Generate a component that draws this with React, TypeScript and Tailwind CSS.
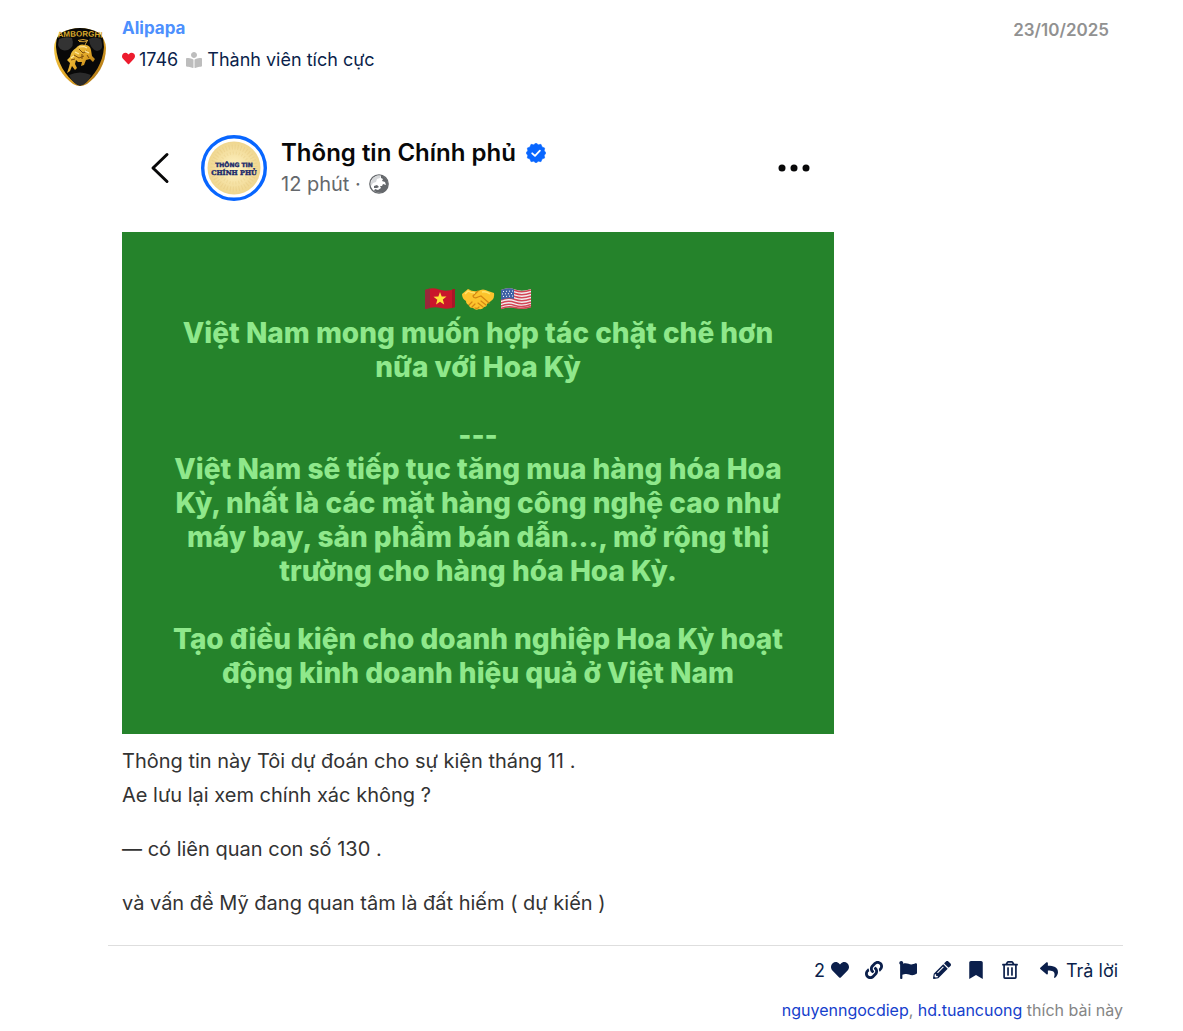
import React, {useState} from "react";
import {FaBookmark, FaBookReader, FaFlag, FaHeart, FaLink, FaPencilAlt, FaRegTrashAlt, FaReply} from "react-icons/fa";

const Shield: React.FC = () => (
    <svg viewBox="0 0 52 58" className="h-[58px] w-[52px]" role="img" aria-label="Alipapa">
        <defs>
            <linearGradient id="gold" x1="0" y1="0" x2="1" y2="1">
                <stop offset="0" stopColor="#f6d04d"/>
                <stop offset="0.55" stopColor="#e0a526"/>
                <stop offset="1" stopColor="#9b6410"/>
            </linearGradient>
            <clipPath id="shieldClip">
                <path d="M7 5Q26-5 45 5Q52 12 52 20C52 36 43 49 33 56Q26 60 19 56C9 49 0 36 0 20Q0 12 7 5Z"/>
            </clipPath>
            <path id="nameArc" d="M0 10Q26 7 52 10"/>
        </defs>
        <g clipPath="url(#shieldClip)">
            <path d="M0 0H52V58H0Z" fill="url(#gold)"/>
            <path d="M5 4Q26-6 47 4Q50 12 50 19C49 35 40 48 31 55Q26 59 21 55C12 48 3 35 2 19Q2 10 5 4Z" fill="#080808"/>
            <path d="M5 11Q12 8 18 10Q21 19 14 22Q6 24 4 17Z" fill="#333"/>
            <path d="M47 11Q40 8 35 11Q36 21 43 23Q49 22 48 16Z" fill="#2c2c2c"/>
            <path d="M15 47Q26 42 37 47Q34 56 26 58Q19 56 15 47Z" fill="#2b2b2b"/>
        </g>
        <text fill="#d9a92c" fontFamily="Liberation Sans" fontWeight="700" fontSize="8" textAnchor="middle">
            <textPath href="#nameArc" startOffset="50%">AMBORGHI</textPath>
        </text>
        <path d="M24 12.500Q29 10.500 34 12.500Q31 14.500 25 13.500M33 13L31 17" fill="none" stroke="#d6a437" strokeWidth="1"/>
        <path
            d="M22 20Q26 15 31 17Q36 17 37 22L38 28L41 31L39 34L36 31L32 32L30 37L27 38L28 34L24 34L22 32L21 36L23 40L21 42L18 38L16 43L13 45L15 39L16 35L13 32L16 29Q17 23 22 20Z"
            fill="url(#gold)"/>
        <path d="M25 21L29 25L33 23M20 27L25 30L30 28M33 27L35 30M17 32L21 31M28 26L28 31" fill="none" stroke="#7b4b0c" strokeWidth="1"/>
        <path d="M25 19L30 18.500L33 20M21 24L25 26M31 23L35 25M17 30L20 28" fill="none" stroke="#ffe8a0" strokeWidth="1.200"/>
    </svg>
);

const PageSeal: React.FC = () => (
    <svg viewBox="0 0 66 66" className="size-[66px] shrink-0" role="img" aria-label="Thông tin Chính phủ">
        <defs>
            <radialGradient id="seal">
                <stop offset="0" stopColor="#fff3c4"/>
                <stop offset="1" stopColor="#efd68f"/>
            </radialGradient>
        </defs>
        <circle cx="33" cy="33" r="31.300" fill="#fff" stroke="#0866ff" strokeWidth="3.400"/>
        <circle cx="33" cy="33" r="26.500" fill="url(#seal)"/>
        <circle cx="33" cy="33" r="21" fill="none" stroke="#e3c67c" strokeWidth="5" strokeDasharray="1 2" opacity="0.4"/>
        <circle cx="33" cy="33" r="15" fill="none" stroke="#e3c67c" strokeWidth="3" strokeDasharray="1 2" opacity="0.3"/>
        <g fill="#1b2a6b" stroke="#1b2a6b" strokeWidth="0.400" fontWeight="700" textAnchor="middle">
            <text x="33" y="32" fontSize="6" fontFamily="DejaVu Sans">THÔNG TIN</text>
            <text x="33" y="40" fontSize="6.500" fontFamily="DejaVu Serif">CHÍNH PHỦ</text>
        </g>
    </svg>
);

const Verified: React.FC = () => (
    <svg viewBox="0 0 20 20" className="size-5" role="img" aria-label="Đã xác minh">
        <path
            d="M10 0L12.300 1.700L15 1.300L16.100 3.900L18.700 5L18.300 7.700L20 10L18.300 12.300L18.700 15L16.100 16.100L15 18.700L12.300 18.300L10 20L7.700 18.300L5 18.700L3.900 16.100L1.300 15L1.700 12.300L0 10L1.700 7.700L1.300 5L3.900 3.900L5 1.300L7.700 1.700Z"
            fill="#0866ff" stroke="#0866ff" strokeLinejoin="round" strokeWidth="0.500"/>
        <path d="M6.200 10.300L9 12.900L13.900 7.700" fill="none" stroke="#fff" strokeWidth="1.800" strokeLinecap="round" strokeLinejoin="round"/>
    </svg>
);

const Globe: React.FC = () => (
    <svg viewBox="0 0 20 20" className="size-5" aria-hidden="true">
        <circle cx="10" cy="10" r="9.200" fill="#fff" stroke="#65686c" strokeWidth="1.300"/>
        <path
            d="M12 1.500Q18 3 19 9Q19 15 15 18Q9 20 5 17L6 15L9 16L12 14L11 12L13 12L14 10L17 11L16 8L13 7L14 5L12 4Z"
            fill="#65686c"/>
        <path d="M2 8L4 4L8 1.500L12 1.500L11 4L8 5L7 8L4 9L2 12Z" fill="#d5d7d9"/>
        <path d="M5 12L8 11L10 13L8 14L5 14Z" fill="#65686c"/>
    </svg>
);

const VietnamFlag: React.FC = () => (
    <svg viewBox="0 0 32 24" className="h-6 w-8" role="img" aria-label="Việt Nam">
        <path d="M1 3Q8 0 15 2.500T31 2V20Q24 23 17 21T1 22Z" fill="#c9162b"/>
        <path d="M1 3Q4 2 6 1.500V21L1 22Z" fill="#98283a"/>
        <path d="M28 2.600L31 2V20L28 21Z" fill="#a71628"/>
        <path d="M16 5L17.700 9.500L22.500 9.600L18.800 12.600L20.200 17.500L16 14.700L12 17.500L13.300 12.700L9.500 9.700L14.400 9.500Z" fill="#ffe13a"/>
    </svg>
);

const Handshake: React.FC = () => (
    <svg viewBox="0 0 34 24" className="h-6 w-[34px]" role="img" aria-label="Bắt tay">
        <path
            d="M1 7L7 2Q12 5 17 4Q22 1 27 4L33 6Q34 11 30 14L26 17Q26 20 23 20Q21 23 18 22Q15 24 12 21Q8 21 8 18Q5 17 5 14Q1 12 1 7Z"
            fill="#fcc42d"/>
        <path d="M17 4L12 9Q13 12 17 10L20 9L28 16M14 21Q17 22 18 20M20 14L25 18M17 16L22 20M8 18L11 15M11 20L14 17" fill="none"
              stroke="#d48613" strokeWidth="1.200" strokeLinecap="round"/>
        <path d="M4 7L7 4Q10 6 14 6M21 5Q25 4 29 7" fill="none" stroke="#ffe36b" strokeWidth="1.500"/>
    </svg>
);

const UsFlag: React.FC = () => (
    <svg viewBox="0 0 32 24" className="h-6 w-8" role="img" aria-label="Hoa Kỳ">
        <path d="M1 3Q8 0 15 2.500T31 2V20Q24 23 17 21T1 22Z" fill="#f3f1f2"/>
        <g fill="none" stroke="#d34755" strokeWidth="1.500">
            <path d="M1 4Q8 1 15 3.500T31 3"/>
            <path d="M1 7Q8 4 15 6.500T31 6"/>
            <path d="M1 10Q8 7 15 9.500T31 9"/>
            <path d="M1 13Q8 10 15 12.500T31 12"/>
            <path d="M1 16Q8 13 15 15.500T31 15"/>
            <path d="M1 19Q8 16 15 18.500T31 17.500"/>
            <path d="M1 21.500Q8 18.500 15 20.500T31 19.500"/>
        </g>
        <path d="M1 3Q8 0 14 2.200V12Q8 10 1 13Z" fill="#3f62a5"/>
        <g stroke="#fff" strokeWidth="1" strokeDasharray="1 2">
            <path d="M3 4.500L13 4"/>
            <path d="M2 7L13 6.500"/>
            <path d="M3 9.500L13 9"/>
        </g>
    </svg>
);

const paragraphs = [
    ["Việt Nam mong muốn hợp tác chặt chẽ hơn", "nữa với Hoa Kỳ"]
    , ["---", "Việt Nam sẽ tiếp tục tăng mua hàng hóa Hoa", "Kỳ, nhất là các mặt hàng công nghệ cao như", "máy bay, sản phẩm bán dẫn..., mở rộng thị", "trường cho hàng hóa Hoa Kỳ."]
    , ["Tạo điều kiện cho doanh nghiệp Hoa Kỳ hoạt", "động kinh doanh hiệu quả ở Việt Nam"]
];

const SharedPost: React.FC = () => (
    <section className="max-w-[712px]">
        <div className="flex h-[132px] items-center pt-1 pr-6 pl-7">
            <button type="button" aria-label="Quay lại" className="w-[51px]">
                <svg viewBox="0 0 20 32" className="h-8 w-5">
                    <path d="M17 2.500L3 16L17 29.500" fill="none" stroke="#080809" strokeWidth="3" strokeLinecap="round" strokeLinejoin="round"/>
                </svg>
            </button>
            <PageSeal/>
            <div className="ml-[14px] grow">
                <h2 className="flex items-center gap-[10px] text-[24px] leading-8 font-semibold text-[#080809]">
                    Thông tin Chính phủ <Verified/>
                </h2>
                <p className="flex items-center gap-2 text-[20px] leading-[30px] text-[#65686c]">
                    <span>12 phút ·</span> <Globe/>
                </p>
            </div>
            <button type="button" aria-label="Thêm">
                <svg viewBox="0 0 32 8" className="h-2 w-8" fill="#080809">
                    <circle cx="4" cy="4" r="3.500"/>
                    <circle cx="16" cy="4" r="3.500"/>
                    <circle cx="28" cy="4" r="3.500"/>
                </svg>
            </button>
        </div>
        <div className="bg-[#25832b] pt-[50px] pb-11 text-center text-[28px] leading-[34px] font-extrabold text-[#8fe88b]">
            <div className="flex h-[34px] items-center justify-center gap-[5px]">
                <VietnamFlag/>
                <Handshake/>
                <UsFlag/>
            </div>
            <div className="space-y-[34px]">
                {paragraphs.map((lines, index) => (
                    <p key={index}>
                        {lines.map((line) => <span key={line} className="block">{line}</span>)}
                    </p>
                ))}
            </div>
        </div>
    </section>
);

const actions = [
    {name: "Sao chép liên kết", Icon: FaLink}
    , {name: "Gắn cờ", Icon: FaFlag}
    , {name: "Chỉnh sửa", Icon: FaPencilAlt}
    , {name: "Đánh dấu", Icon: FaBookmark}
    , {name: "Xóa", Icon: FaRegTrashAlt}
];

const App: React.FC = () => {
    const [likes, setLikes] = useState<number>(2);

    return (
        <main className="min-h-screen bg-white pt-3 pr-[60px] pl-[54px] font-['Inter',sans-serif]">
            <article className="flex gap-[2px]">
                <a href="#alipapa" className="mt-4 shrink-0 self-start"><Shield/></a>
                <div className="min-w-0 grow">
                    <header className="flex justify-between px-[14px]">
                        <div>
                            <a href="#alipapa" className="block text-[17px] leading-8 font-bold text-[#4d90fe]">Alipapa</a>
                            <div className="flex items-center text-[18px] leading-8 text-[#0b1f4b]">
                                <FaHeart className="mr-1 mb-1 size-[13px] text-[#ed1c2e]"/>
                                <span>1746</span>
                                <FaBookReader className="mr-[5px] ml-2 size-4 text-[#bdbdbd]"/>
                                <span>Thành viên tích cực</span>
                            </div>
                        </div>
                        <time dateTime="2025-10-23" className="text-[17px] leading-9 font-semibold text-[#919191]">23/10/2025</time>
                    </header>
                    <div className="px-[14px] pt-6 pb-[25px] text-[20px] leading-[34px] text-[#333]">
                        <SharedPost/>
                        <p className="mt-[10px]">Thông tin này Tôi dự đoán cho sự kiện tháng 11 .<br/>Ae lưu lại xem chính xác không ?</p>
                        <p className="mt-5">— có liên quan con số 130 .</p>
                        <p className="mt-5">và vấn đề Mỹ đang quan tâm là đất hiếm ( dự kiến )</p>
                    </div>
                    <footer className="border-t border-[#dedede]">
                        <nav className="flex h-12 items-center justify-end pr-[5px] text-[18px] text-[#0b1f4b]">
                            <button type="button" className="mr-4 flex items-center gap-[6px]" onClick={() => setLikes(likes === 2 ? 3 : 2)}>
                                {likes} <FaHeart className="size-[18px]"/>
                            </button>
                            {actions.map(({name, Icon}) => (
                                <button key={name} type="button" aria-label={name} className="mr-4">
                                    <Icon className="size-[18px]"/>
                                </button>
                            ))}
                            <button type="button" className="ml-[5px] flex items-center gap-2"><FaReply className="size-[18px]"/> Trả lời</button>
                        </nav>
                        <p className="text-right text-[16px] leading-8 text-[#858585]">
                            <a href="#nguyenngocdiep" className="text-[#1540cc]">nguyenngocdiep</a>, <a href="#hd.tuancuong" className="text-[#1540cc]">hd.tuancuong</a> thích bài này
                        </p>
                    </footer>
                </div>
            </article>
        </main>
    );
};
export default App;
